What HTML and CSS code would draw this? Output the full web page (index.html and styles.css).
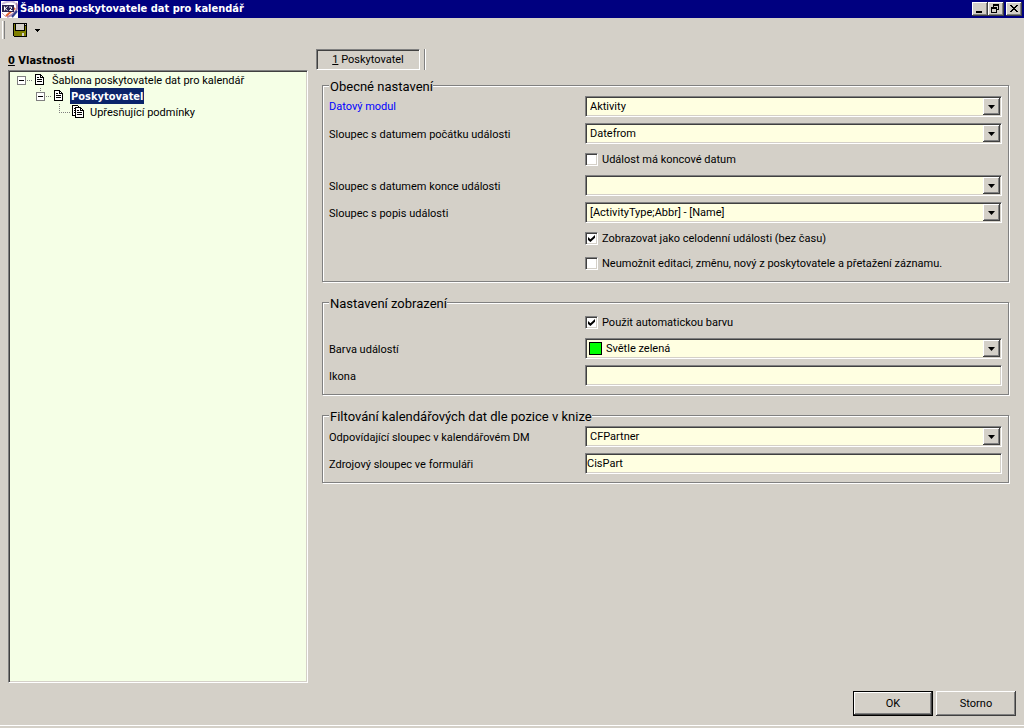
FILE: index.html
```html
<!DOCTYPE html>
<html lang="cs">
<head>
<meta charset="utf-8">
<title>Šablona poskytovatele dat pro kalendář</title>
<link rel="stylesheet" href="styles.css">
</head>
<body>
<header class="titlebar">
  <svg class="logo" width="17" height="17" viewBox="0 0 17 17" aria-hidden="true">
    <rect width="17" height="17" fill="#fff"/>
    <path d="M1 3C6 0 12 0 14 2" stroke="#c9b8d8" stroke-width="2" fill="none"/>
    <path d="M15 2C18 7 15 13 6 16" stroke="#b088b0" stroke-width="2" fill="none"/>
    <path d="M14 7L5 15" stroke="#e06030" stroke-width="2"/>
    <path d="M16 10L11 16" stroke="#30408c" stroke-width="2"/>
    <path d="M1 12L5 16" stroke="#d8a0b0" stroke-width="1"/>
    <rect x="1" y="4" width="12" height="7" fill="#2b2350"/>
    <path d="M3.500 5.500v4M6.500 5.500L4 7.500L6.500 9.500M8 6h2.500v1.500L8.500 9.500h3" stroke="#fff" fill="none"/>
  </svg>
  <h1 class="title">Šablona poskytovatele dat pro kalendář</h1>
  <div class="window-buttons">
    <button class="win-btn" type="button" aria-label="Minimalizovat"><svg width="12" height="10" viewBox="0 0 12 10" shape-rendering="crispEdges"><path d="M2 7h6v2H2z"/></svg></button>
    <button class="win-btn" type="button" aria-label="Obnovit"><svg width="12" height="10" viewBox="0 0 12 10" shape-rendering="crispEdges"><path fill-rule="evenodd" d="M3 0h6v6H7V5h1V2H4v1H3zM1 3h6v6H1zM2 5v3h4V5z"/></svg></button>
    <button class="win-btn win-close" type="button" aria-label="Zavřít"><svg width="12" height="10" viewBox="0 0 12 10" shape-rendering="crispEdges"><path d="M2 1h2v1h1v1h2V2h1V1h2v1H9v1H8v1H7v1h1v1h1v1h1v1H8V7H7V6H5v1H4v1H2V7h1V6h1V5h1V4H4V3H3V2H2z"/></svg></button>
  </div>
</header>

<div class="toolbar">
  <span class="grip"></span>
  <button class="tool-btn" type="button" aria-label="Uložit">
    <svg width="14" height="14" viewBox="0 0 14 14" shape-rendering="crispEdges">
      <path d="M0 0h14v14H1L0 13z" fill="#000"/>
      <path d="M1 1h1v7h10V3h1v10H1z" fill="#808000"/>
      <path d="M3 1h8v6H3zM12 1h1v1h-1zM9 10h2v3H9z" fill="#d4d0c8"/>
    </svg>
  </button>
  <button class="tool-btn" type="button" aria-label="Možnosti uložení">
    <svg width="5" height="3" viewBox="0 0 5 3" shape-rendering="crispEdges"><path d="M0 0h5v1H4v1H3v1H2V2H1V1H0z"/></svg>
  </button>
</div>

<main class="main">
  <section class="side">
    <h2 class="caption"><u>0</u> Vlastnosti</h2>
    <div class="tree" role="tree">
      <div class="node" role="treeitem">
        <button class="toggle" type="button" aria-label="Sbalit"><svg width="16" height="16" viewBox="0 0 16 16" shape-rendering="crispEdges"><path d="M.5 4.500h8v8h-8z" fill="#fff" stroke="#808080"/><path d="M2 8h5v1H2z"/><path d="M10 8h1v1h-1zM12 8h1v1h-1zM14 8h1v1h-1z" fill="#808080"/></svg></button>
        <svg class="doc" width="16" height="16" viewBox="0 0 16 16" shape-rendering="crispEdges"><path d="M2.500 2.500h5l3 3v7h-8z" fill="#fff" stroke="#000"/><path d="M7 3h1v2h2v1H7zM4 5h2v1H4zM4 7h5v1H4zM4 9h5v1H4z"/></svg>
        <span class="label">Šablona poskytovatele dat pro kalendář</span>
      </div>
      <div class="node level-1" role="treeitem">
        <button class="toggle" type="button" aria-label="Sbalit"><svg width="16" height="16" viewBox="0 0 16 16" shape-rendering="crispEdges"><path d="M4 0h1v1H4zM4 2h1v1H4z" fill="#808080"/><path d="M.5 4.500h8v8h-8z" fill="#fff" stroke="#808080"/><path d="M2 8h5v1H2z"/><path d="M10 8h1v1h-1zM12 8h1v1h-1zM14 8h1v1h-1z" fill="#808080"/></svg></button>
        <svg class="doc" width="16" height="16" viewBox="0 0 16 16" shape-rendering="crispEdges"><path d="M2.500 2.500h5l3 3v7h-8z" fill="#fff" stroke="#000"/><path d="M7 3h1v2h2v1H7zM4 5h2v1H4zM4 7h5v1H4zM4 9h5v1H4z"/></svg>
        <span class="label selected">Poskytovatel</span>
      </div>
      <div class="node level-2" role="treeitem">
        <svg width="16" height="16" viewBox="0 0 16 16" shape-rendering="crispEdges"><path d="M4 0h1v1H4zM4 2h1v1H4zM4 4h1v1H4zM4 6h1v1H4zM4 8h1v1H4zM6 8h1v1H6zM8 8h1v1H8zM10 8h1v1h-1zM12 8h1v1h-1zM14 8h1v1h-1z" fill="#808080"/></svg>
        <svg class="doc" width="16" height="16" viewBox="0 0 16 16" shape-rendering="crispEdges"><path d="M1.500 1.500h5l2 2v8h-7z" fill="#fff" stroke="#000"/><path d="M3 4h1v1H3zM3 6h1v1H3zM3 8h1v1H3z"/><path d="M4.500 3.500h5l3 3v7h-8z" fill="#fff" stroke="#000"/><path d="M9 4h1v2h2v1H9zM6 6h2v1H6zM6 8h5v1H6zM6 10h5v1H6z"/></svg>
        <span class="label">Upřesňující podmínky</span>
      </div>
    </div>
  </section>

  <section class="content">
    <div class="tabs" role="tablist">
      <button class="tab" type="button" role="tab" aria-selected="true"><u>1</u> Poskytovatel</button>
      <span class="tab-end"></span>
    </div>
    <form class="groups" id="provider">
      <fieldset class="group">
        <legend class="legend">Obecné nastavení</legend>
        <div class="fields">
          <label class="name link" for="module">Datový modul</label>
          <div class="combo"><select id="module"><option>Aktivity</option></select><span class="arrow"></span></div>
          <label class="name" for="start">Sloupec s datumem počátku události</label>
          <div class="combo"><select id="start"><option>Datefrom</option></select><span class="arrow"></span></div>
          <label class="check"><input type="checkbox">Událost má koncové datum</label>
          <label class="name" for="end">Sloupec s datumem konce události</label>
          <div class="combo"><select id="end"><option></option></select><span class="arrow"></span></div>
          <label class="name" for="desc">Sloupec s popis události</label>
          <div class="combo"><select id="desc"><option>[ActivityType;Abbr] - [Name]</option></select><span class="arrow"></span></div>
          <label class="check"><input type="checkbox" checked>Zobrazovat jako celodenní události (bez času)</label>
          <label class="check"><input type="checkbox">Neumožnit editaci, změnu, nový z poskytovatele a přetažení záznamu.</label>
        </div>
      </fieldset>
      <fieldset class="group">
        <legend class="legend">Nastavení zobrazení</legend>
        <div class="fields">
          <label class="check"><input type="checkbox" checked>Použit automatickou barvu</label>
          <label class="name" for="color">Barva událostí</label>
          <div class="combo"><span class="swatch"></span><select id="color"><option>Světle zelená</option></select><span class="arrow"></span></div>
          <label class="name" for="icon">Ikona</label>
          <input class="text" id="icon" type="text">
        </div>
      </fieldset>
      <fieldset class="group">
        <legend class="legend">Filtování kalendářových dat dle pozice v knize</legend>
        <div class="fields">
          <label class="name" for="target">Odpovídající sloupec v kalendářovém DM</label>
          <div class="combo"><select id="target"><option>CFPartner</option></select><span class="arrow"></span></div>
          <label class="name" for="source">Zdrojový sloupec ve formuláři</label>
          <input class="text" id="source" type="text" value="CisPart">
        </div>
      </fieldset>
    </form>
  </section>
</main>

<footer class="footer">
  <button class="btn default" type="submit" form="provider">OK</button>
  <button class="btn" type="button">Storno</button>
</footer>
</body>
</html>
```
FILE: styles.css
```css
* { box-sizing: border-box; }

body {
  margin: 0;
  min-height: 100vh;
  display: flex;
  flex-direction: column;
  background: #d4d0c8;
  color: #000;
  font: 11px/16px Tahoma, Roboto, sans-serif;
}

button, input, select {
  font: inherit;
  color: inherit;
  margin: 0;
  padding: 0;
  border: 0;
  border-radius: 0;
  background: none;
}

/* Title bar */
.titlebar {
  display: flex;
  align-items: center;
  height: 18px;
  padding: 0 2px 0 1px;
  background: #000080;
  color: #fff;
}
.title, .caption, .selected {
  font-family: Tahoma, "DejaVu Sans Condensed", sans-serif;
  font-size: 11px;
  font-weight: bold;
}
.title {
  flex: 1;
  margin: 0 0 0 2px;
}
.window-buttons { display: flex; }
.win-btn {
  display: flex;
  width: 16px;
  height: 14px;
  padding: 2px;
  background: #d4d0c8;
  box-shadow: inset -1px -1px #404040, inset 1px 1px #fff, inset -2px -2px #808080;
}
.win-close { margin-left: 2px; }

/* Toolbar */
.toolbar {
  display: flex;
  align-items: center;
  gap: 8px;
  height: 24px;
  padding: 0 2px;
}
.grip {
  width: 3px;
  height: 18px;
  border-left: 1px solid #fff;
  border-right: 1px solid #808080;
}
.tool-btn { display: flex; }

/* Layout */
.main {
  flex: 1;
  display: flex;
  gap: 8px;
  padding: 7px 14px 0 8px;
}
.side {
  display: flex;
  flex-direction: column;
  width: 300px;
}
.content { flex: 1; }
.caption {
  height: 21px;
  margin: 0;
  line-height: 23px;
}

/* Tree */
.tree {
  flex: 1;
  padding: 1px 0;
  background: #f5ffe6;
}
.tree, .combo, .text {
  border: 1px solid;
  border-color: #808080 #fff #fff #808080;
  box-shadow: inset 1px 1px #404040, inset -1px -1px #d4d0c8;
}
.node {
  display: flex;
  align-items: center;
  height: 16px;
  padding-left: 8px;
}
.level-1 { padding-left: 27px; }
.level-2 { padding-left: 46px; }
.toggle { display: flex; }
.doc { margin-right: 2px; }
.label {
  height: 16px;
  padding: 0 1px;
  line-height: 18px;
}
.selected {
  background: #0a246a;
  color: #fff;
}

/* Tabs */
.tabs {
  display: flex;
  gap: 4px;
  height: 21px;
}
.tab {
  width: 104px;
  padding-top: 1px;
  border: 1px solid;
  border-color: #808080 #fff #fff #808080;
  box-shadow: inset 1px 1px #404040;
}
.tab-end {
  width: 2px;
  border-left: 1px solid #808080;
  border-right: 1px solid #fff;
}

/* Groups */
.groups {
  display: flex;
  flex-direction: column;
  gap: 12px;
  padding: 7px 1px 0 6px;
}
.group {
  min-width: 0;
  margin: 0;
  padding: 2px 6px 8px;
  border: 1px solid #808080;
  box-shadow: 1px 1px #fff, inset 1px 1px #fff;
}
.legend {
  height: 17px;
  padding: 0 0 0 1px;
  background: #d4d0c8;
  font-size: 13px;
  line-height: 19px;
}
.fields {
  display: grid;
  grid-template-columns: 256px 1fr;
  gap: 6px 0;
}
.name {
  height: 21px;
  line-height: 23px;
}
.link {
  line-height: 21px;
  color: #00f;
}

.check {
  grid-column: 2;
  display: flex;
  align-items: center;
  gap: 4px;
  height: 19px;
}
.check input {
  appearance: none;
  display: grid;
  place-items: center;
  width: 13px;
  height: 13px;
  border: 1px solid;
  border-color: #808080 #fff #fff #808080;
  background: #fff;
  box-shadow: inset 1px 1px #404040, inset -1px -1px #d4d0c8;
}
.check input:checked::before {
  content: "";
  width: 7px;
  height: 7px;
  background: #000;
  clip-path: polygon(0 30%, 35% 62%, 100% 0, 100% 40%, 35% 100%, 0 70%);
}

.combo {
  position: relative;
  display: flex;
  align-items: center;
  height: 21px;
  background: #ffffe1;
}
.combo select {
  appearance: none;
  flex: 1;
  height: 19px;
  padding: 0 20px 0 4px;
}
.arrow {
  position: absolute;
  top: 1px;
  right: 1px;
  width: 17px;
  height: 17px;
  pointer-events: none;
  background: #d4d0c8;
  box-shadow: inset -1px -1px #404040, inset 1px 1px #fff, inset -2px -2px #808080;
}
.arrow::before {
  content: "";
  position: absolute;
  top: 7px;
  left: 5px;
  width: 7px;
  height: 4px;
  background: #000;
  clip-path: polygon(0 0, 100% 0, 50% 100%);
}
.swatch {
  width: 13px;
  height: 13px;
  margin-left: 3px;
  border: 1px solid #000;
  background: #0f0;
}
.text {
  width: 100%;
  height: 21px;
  padding: 0 1px;
  background: #ffffe1;
}

/* Footer */
.footer {
  display: flex;
  justify-content: flex-end;
  gap: 3px;
  margin-bottom: 2px;
  padding: 8px 8px 9px;
  border-bottom: 1px solid #fff;
}
.btn {
  width: 80px;
  height: 25px;
  padding-top: 1px;
  background: #d4d0c8;
  box-shadow: inset -1px -1px #404040, inset 1px 1px #fff, inset -2px -2px #808080;
}
.default {
  border: 1px solid #000;
}
```
